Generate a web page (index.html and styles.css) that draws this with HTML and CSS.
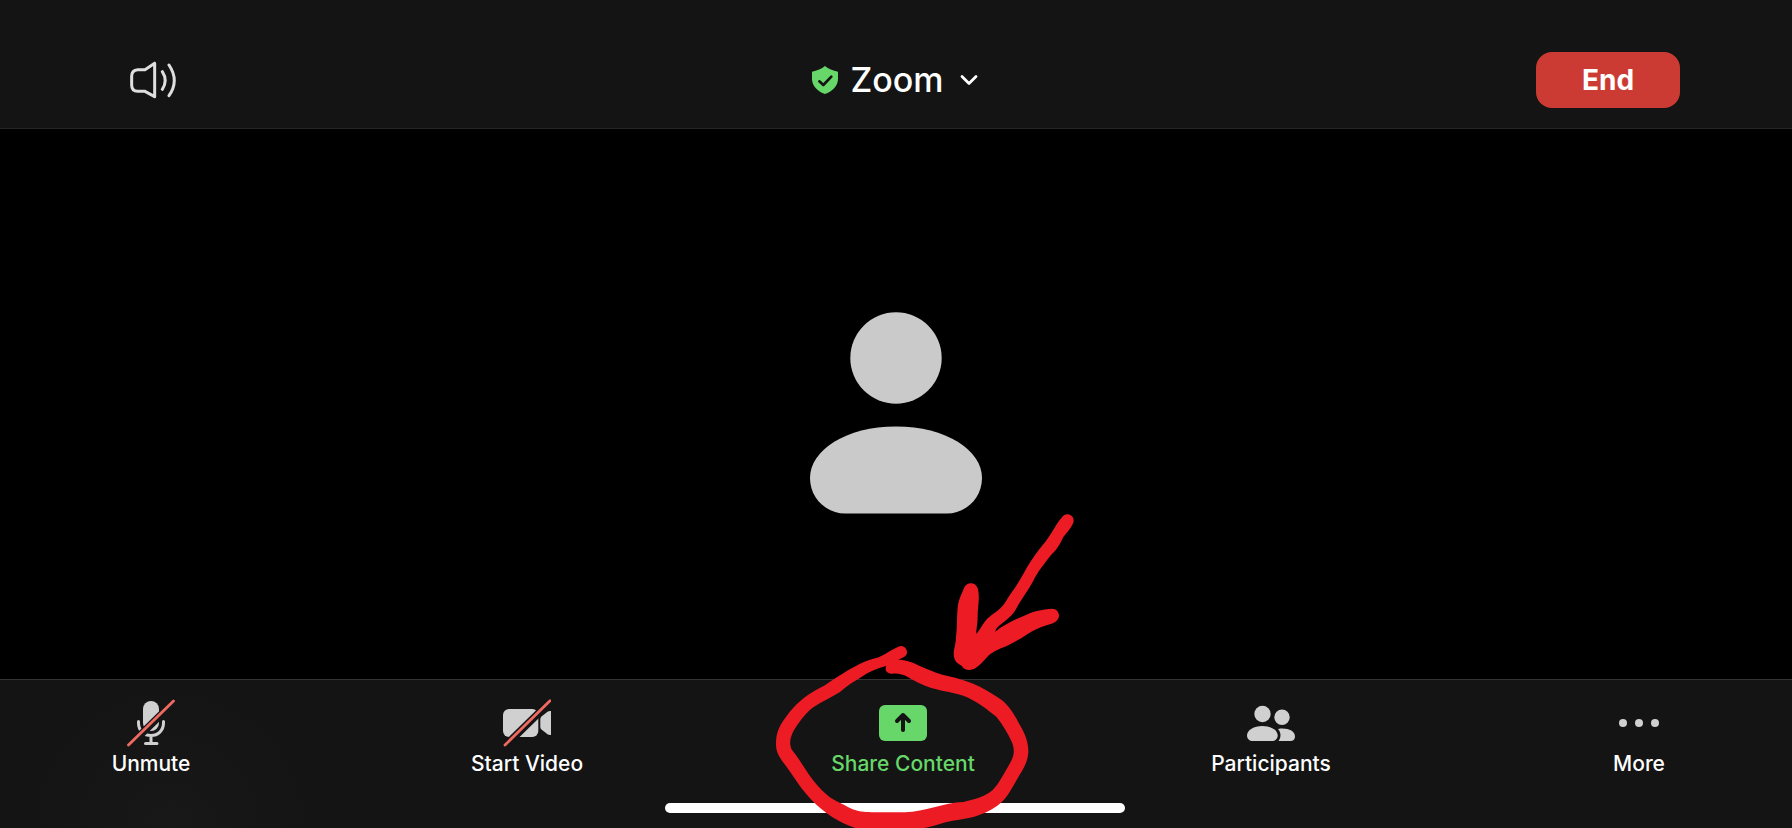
FILE: index.html
```html
<!DOCTYPE html>
<html lang="en">
<head>
<meta charset="utf-8">
<meta name="viewport" content="width=device-width, initial-scale=1">
<title>Zoom</title>
<link rel="stylesheet" href="styles.css">
</head>
<body>
<div class="meeting">
  <header class="topbar">
    <button class="speaker" type="button" aria-label="Speaker">
      <svg width="48" height="38" viewBox="0 0 144 114" fill="none" stroke="#dedede" stroke-width="9" stroke-linecap="round" stroke-linejoin="round">
        <path d="M74 7V107M74 7L45 26H23C10 27 5 36 5 46V72C5 84 12 91 23 91H45L74 107" />
        <path d="M97 32C108 49 108 68 97 85M117 12C138 43 138 74 117 104" />
      </svg>
    </button>
    <button class="title" type="button">
      <svg width="26" height="28" viewBox="0 0 78 84">
        <path fill="#67d769" d="M39 0C49 9 63 14 78 17V39C78 60 60 77 39 84C18 77 0 60 0 39V17C15 14 29 9 39 0Z" />
        <path fill="none" stroke="#141414" stroke-width="8" stroke-linecap="round" stroke-linejoin="round" d="M22 46L34 57L58 32" />
      </svg>
      <span class="title-text">Zoom</span>
      <svg class="chevron" width="18" height="12" viewBox="0 0 18 12" fill="none" stroke="#fff" stroke-width="2.8" stroke-linecap="round" stroke-linejoin="round">
        <path d="M2 2.500L9 9.500L16 2.500" />
      </svg>
    </button>
    <button class="end" type="button">End</button>
  </header>

  <main class="stage">
    <svg class="avatar" width="172" height="202" viewBox="0 0 172 202" fill="#cacaca" role="img" aria-label="Participant">
      <circle cx="86" cy="46" r="45.7" />
      <path d="M86 114.500C136 114.500 172 138 172 166C172 186 156 201.500 137 201.500H35C16 201.500 0 186 0 166C0 138 36 114.500 86 114.500Z" />
    </svg>
  </main>

  <footer class="bottombar">
    <nav class="tools">
      <button class="tool" type="button">
        <svg width="48" height="48" viewBox="0 0 48 48">
          <rect x="16" y="2" width="16" height="30" rx="8" fill="#d0d0d0" />
          <path d="M11.500 22.500V24C11.500 31.500 17 36.500 24 36.500S36.500 31.500 36.500 24V22.500M24 37V44M18.500 44.500H30" fill="none" stroke="#d0d0d0" stroke-width="3" stroke-linecap="round" />
          <path d="M2.500 46.500L47.500 2.500" stroke="#161616" stroke-width="7.500" />
          <path d="M1.500 46L46.500 2" stroke="#ee6a61" stroke-width="2.800" stroke-linecap="round" />
        </svg>
        <span>Unmute</span>
      </button>
      <button class="tool" type="button">
        <svg width="48" height="48" viewBox="0 0 48 48">
          <rect x="0" y="10" width="35.300" height="28" rx="6" fill="#d0d0d0" />
          <path d="M37.300 20Q37.300 18.500 38.500 17.500L44.500 12.700Q46 11.700 48 12V36Q46 36.300 44.500 35.300L38.500 30.500Q37.300 29.500 37.300 28Z" fill="#d0d0d0" />
          <path d="M2.500 46.500L47.500 2.500" stroke="#141414" stroke-width="7.500" />
          <path d="M2 46L47 1.800" stroke="#ee6a61" stroke-width="2.800" stroke-linecap="round" />
        </svg>
        <span>Start Video</span>
      </button>
      <button class="tool tool-share" type="button">
        <svg width="48" height="48" viewBox="0 0 48 48">
          <rect x="0" y="6" width="48" height="36" rx="6" fill="#67d769" />
          <path d="M24 31V16M18 22L24 16L30 22" fill="none" stroke="#141414" stroke-width="4" stroke-linecap="round" stroke-linejoin="round" />
        </svg>
        <span>Share Content</span>
      </button>
      <button class="tool tool-people" type="button">
        <svg width="48" height="48" viewBox="0 0 48 48" fill="#d0d0d0">
          <circle cx="15.500" cy="15" r="8.200" />
          <circle cx="35" cy="18.300" r="7.700" />
          <path d="M15.300 27C24 27 30.700 31 30.700 36.500C30.700 40 28 42 25 42H6C2.500 42 0 40 0 36.500C0 31 7 27 15.300 27Z" />
          <path d="M31 30C40 28.500 48 31.500 48 37.500C48 40.500 46 42 43.500 42H31.500C34.500 38 34 33.500 31 30Z" />
        </svg>
        <span>Participants</span>
      </button>
      <button class="tool" type="button">
        <svg width="48" height="48" viewBox="0 0 48 48" fill="#d0d0d0">
          <circle cx="8" cy="24" r="4" />
          <circle cx="24" cy="24" r="4" />
          <circle cx="40" cy="24" r="4" />
        </svg>
        <span>More</span>
      </button>
    </nav>
    <div class="home-indicator"></div>
  </footer>

  <svg class="markup" width="340" height="328" viewBox="0 0 1020 984" fill="#ed1c24" aria-hidden="true">
    <path fill-rule="evenodd" d="M415 440C428 434 441 444 441 457C441 466 436 471 414 479C460 479 490 510 560 527C640 543 690 575 726 601C754 625 766 650 786 686C800 713 805 733 805 756C803 792 786 811 770 840C750 876 735 902 712 917C665 951 620 955 577 962C540 970 515 980 492 984H286C235 966 200 942 170 915C120 868 95 818 66 782C49 759 48 745 48 727C49 695 60 674 80 648C103 615 135 588 168 570C205 552 212 543 235 529C265 511 305 485 345 475C366 470 385 454 415 440ZM379 497C372 513 383 521 398 521C435 519 445 536 475 548C525 573 570 573 610 587C650 602 682 629 709 650C728 673 744 701 755 725C769 757 758 777 744 800C728 826 717 851 698 870C674 891 640 899 610 906C550 908 495 935 435 937H345C290 936 280 930 247 912C230 904 213 897 198 882C150 841 129 790 96 750C86 731 91 713 100 694C115 670 133 642 160 622C185 604 212 594 240 576C258 560 280 545 309 528C327 515 349 506 379 497Z" />
    <path d="M906 52C916 36 941 43 941 62C939 77 925 92 910 111C900 130 896 143 875 163C850 195 834 215 820 242C804 271 790 290 776 313C764 335 761 343 735 363C719 376 707 383 706 395C735 371 777 353 813 338C839 330 856 327 875 326C890 326 897 336 897 348C895 360 886 368 872 372C821 385 803 405 763 426C733 443 707 449 687 465C671 482 662 494 650 502C635 513 614 514 605 497C586 489 581 476 581 459C583 443 587 433 588 412C592 380 590 353 593 322C596 297 604 285 611 266C620 243 649 245 654 268C660 297 653 319 653 348C653 377 648 388 649 402C663 386 670 364 689 350C708 335 722 327 734 310C746 288 760 272 774 249C791 222 798 205 815 180C832 155 843 141 858 123C875 101 889 71 906 52Z" />
  </svg>
</div>
</body>
</html>
```
FILE: styles.css
```css
* {
  box-sizing: border-box;
}

body {
  margin: 0;
  background: #000;
  color: #fff;
  font-family: Inter, "Liberation Sans", sans-serif;
}

button {
  margin: 0;
  padding: 0;
  border: 0;
  background: none;
  color: inherit;
  font: inherit;
  cursor: pointer;
}

svg {
  display: block;
  flex: none;
}

.meeting {
  position: relative;
  display: flex;
  flex-direction: column;
  min-height: 100vh;
  overflow: hidden;
}

.topbar {
  display: grid;
  grid-template-columns: 1fr auto 1fr;
  align-items: center;
  padding: 52px 112px 20px;
  background: #141414;
  border-bottom: 1px solid #262626;
}

.speaker {
  justify-self: start;
  padding: 0 18px;
}

.title {
  display: flex;
  align-items: center;
  gap: 12px;
  padding-right: 2px;
}

.title-text {
  font-size: 34px;
  font-weight: 500;
  line-height: 40px;
}

.chevron {
  margin-left: 4px;
}

.end {
  justify-self: end;
  width: 144px;
  height: 56px;
  border-radius: 16px;
  background: #cb3b34;
  font-size: 28px;
  font-weight: 700;
}

.stage {
  display: flex;
  flex: 1;
  align-items: center;
  justify-content: center;
  padding-top: 17px;
}

.bottombar {
  padding: 19px 79px 15px 77px;
  border-top: 1px solid #333;
  background: radial-gradient(circle at 170px 100%, #191818, #141414 140px);
}

.tools {
  display: flex;
  justify-content: space-between;
}

.tool {
  display: flex;
  flex-direction: column;
  align-items: center;
  gap: 5px;
  width: 148px;
  font-size: 21px;
  font-weight: 500;
  line-height: 24px;
  white-space: nowrap;
}

.tool-share {
  color: #67d769;
}

.tool-people {
  width: 132px;
}

.home-indicator {
  width: 460px;
  height: 10px;
  margin: 27px auto 0;
  border-radius: 5px;
  background: #fff;
}

.markup {
  position: absolute;
  bottom: 0;
  left: calc(50% - 136px);
  pointer-events: none;
}
```
